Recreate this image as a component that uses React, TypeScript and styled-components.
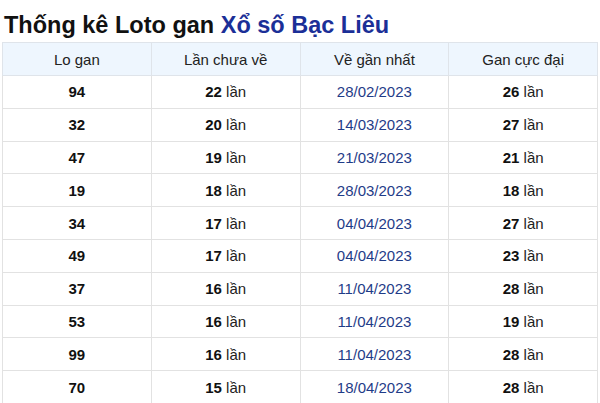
import * as React from 'react';
import styled, { createGlobalStyle } from 'styled-components';

const Global = createGlobalStyle`
  body {
    margin: 0;
    background: #fff;
    font-family: "Liberation Sans", Arial, sans-serif;
    color: #222;
  }
`;

const Page = styled.div`
  padding: 0 2px;
`;

const Title = styled.h2`
  margin: 0;
  padding: 12px 0 3px 2px;
  font-size: 23.5px;
  line-height: 27px;
  font-weight: bold;
  color: #111;
`;

const Blue = styled.span`
  color: #1b2f97;
`;

const Table = styled.table`
  width: 100%;
  border-collapse: collapse;
  table-layout: fixed;
  font-size: 15px;
`;

const Th = styled.th`
  background: #eef6fe;
  border: 1px solid #dfe4ea;
  font-weight: normal;
  height: 32px;
  padding: 0;
  text-align: center;
  color: #222;
`;

const Td = styled.td<{ $date?: boolean }>`
  border: 1px solid #e2e2e2;
  height: 31.8px;
  padding: 0;
  text-align: center;
  color: ${p => (p.$date ? '#1f3c88' : '#222')};
`;

const Num = styled.b`
  color: #111;
`;

const rows: [string, string, string, string][] = [
  ['94', '22', '28/02/2023', '26'],
  ['32', '20', '14/03/2023', '27'],
  ['47', '19', '21/03/2023', '21'],
  ['19', '18', '28/03/2023', '18'],
  ['34', '17', '04/04/2023', '27'],
  ['49', '17', '04/04/2023', '23'],
  ['37', '16', '11/04/2023', '28'],
  ['53', '16', '11/04/2023', '19'],
  ['99', '16', '11/04/2023', '28'],
  ['70', '15', '18/04/2023', '28'],
];

export default function App() {
  return (
    <Page>
      <Global />
      <Title>
        Thống kê Loto gan <Blue>Xổ số Bạc Liêu</Blue>
      </Title>
      <Table>
        <thead>
          <tr>
            <Th>Lo gan</Th>
            <Th>Lần chưa về</Th>
            <Th>Về gần nhất</Th>
            <Th>Gan cực đại</Th>
          </tr>
        </thead>
        <tbody>
          {rows.map(r => (
            <tr key={r[0]}>
              <Td><Num>{r[0]}</Num></Td>
              <Td><Num>{r[1]}</Num> lần</Td>
              <Td $date>{r[2]}</Td>
              <Td><Num>{r[3]}</Num> lần</Td>
            </tr>
          ))}
        </tbody>
      </Table>
    </Page>
  );
}
